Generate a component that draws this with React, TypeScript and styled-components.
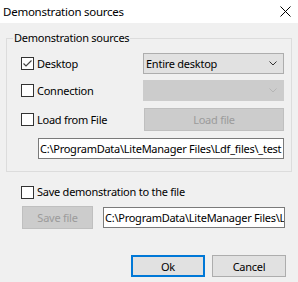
import styled, { createGlobalStyle } from 'styled-components';

const FONT = `"Noto Sans", "Open Sans", sans-serif`;

const GlobalStyle = createGlobalStyle`
  html, body {
    margin: 0;
    padding: 0;
    background: #f0f0f0;
  }
  * {
    box-sizing: border-box;
  }
`;

const Window = styled.div`
  width: 298px;
  height: 282px;
  background: #f0f0f0;
  font-family: ${FONT};
  font-size: 11px;
  letter-spacing: -0.25px;
  color: #000;
  display: flex;
  flex-direction: column;
`;

const TitleBar = styled.div`
  height: 23px;
  background: #fff;
  display: flex;
  align-items: center;
  justify-content: space-between;
  padding: 0 7px 1px 3px;
  font-size: 11.5px;
`;

const Content = styled.div`
  padding: 15px 6px 0 6px;
  display: flex;
  flex-direction: column;
`;

const GroupBox = styled.div`
  position: relative;
  width: 286px;
  border: 1px solid #dcdcdc;
  padding: 14px 7px 12px 14px;
  display: flex;
  flex-direction: column;
`;

const Legend = styled.span`
  position: absolute;
  top: -9px;
  left: 6px;
  padding: 0 1px;
  background: #f0f0f0;
  line-height: 16px;
`;

const Row = styled.div<{ $gap?: number }>`
  display: flex;
  align-items: center;
  justify-content: space-between;
  margin-top: ${(p) => p.$gap ?? 0}px;
`;

const CheckLabel = styled.label`
  display: flex;
  align-items: center;
  gap: 3px;
  line-height: 16px;
`;

const Box = styled.span`
  width: 13px;
  height: 13px;
  border: 1px solid #333;
  background: #fff;
  display: flex;
  align-items: center;
  justify-content: center;
`;

const Combo = styled.div<{ $disabled?: boolean }>`
  width: 141px;
  height: 21px;
  border: 1px solid ${(p) => (p.$disabled ? '#cccccc' : '#adadad')};
  background: ${(p) => (p.$disabled ? '#cccccc' : '#e1e1e1')};
  display: flex;
  align-items: center;
  justify-content: space-between;
  padding: 0 6px 0 2px;
`;

const Button = styled.div<{ $width: number; $disabled?: boolean; $default?: boolean }>`
  width: ${(p) => p.$width}px;
  height: ${(p) => (p.$default !== undefined ? 22 : 23)}px;
  border: ${(p) =>
    p.$default ? '2px solid #0078d7' : p.$disabled ? '1px solid #bfbfbf' : '1px solid #adadad'};
  background: ${(p) => (p.$disabled ? '#cccccc' : '#e1e1e1')};
  color: ${(p) => (p.$disabled ? '#9b9b9b' : '#000')};
  display: flex;
  align-items: center;
  justify-content: center;
`;

const PathInput = styled.div<{ $width: number }>`
  width: ${(p) => p.$width}px;
  height: 21px;
  border: 1px solid #7a7a7a;
  background: #fff;
  padding: 0 1px;
  display: flex;
  align-items: center;
  white-space: nowrap;
  overflow: hidden;
`;

const PathRow = styled.div`
  display: flex;
  margin: 7px 0 0 17px;
`;

const Outside = styled.div`
  padding: 12px 0 0 15px;
  display: flex;
  flex-direction: column;
`;

const SaveRow = styled.div`
  display: flex;
  align-items: center;
  gap: 10px;
  margin: 6px 0 0 1px;
`;

const Footer = styled.div`
  display: flex;
  justify-content: flex-end;
  gap: 7px;
  padding: 26px 6px 0 0;
`;

const Chevron = ({ color }: { color: string }) => (
  <svg width="8" height="5" viewBox="0 0 8 5">
    <path d="M0.5 0.5 L4 4 L7.5 0.5" fill="none" stroke={color} strokeWidth="1" />
  </svg>
);

const CheckBox = ({ checked, label }: { checked?: boolean; label: string }) => (
  <CheckLabel>
    <Box>
      {checked && (
        <svg width="11" height="11" viewBox="0 0 11 11">
          <path d="M1.5 5.5 L4 8 L9.5 2.5" fill="none" stroke="#444" strokeWidth="1.2" />
        </svg>
      )}
    </Box>
    {label}
  </CheckLabel>
);

export default function App() {
  return (
    <>
      <GlobalStyle />
      <Window>
        <TitleBar>
          <span>Demonstration sources</span>
          <svg width="11" height="11" viewBox="0 0 11 11">
            <path d="M0.5 0.5 L10.5 10.5 M10.5 0.5 L0.5 10.5" stroke="#000" strokeWidth="1" />
          </svg>
        </TitleBar>
        <Content>
          <GroupBox>
            <Legend>Demonstration sources</Legend>
            <Row>
              <CheckBox checked label="Desktop" />
              <Combo>
                <span>Entire desktop</span>
                <Chevron color="#333" />
              </Combo>
            </Row>
            <Row $gap={6}>
              <CheckBox label="Connection" />
              <Combo $disabled>
                <span />
                <Chevron color="#b5b5b5" />
              </Combo>
            </Row>
            <Row $gap={7}>
              <CheckBox label="Load from File" />
              <Button $width={140} $disabled>
                Load file
              </Button>
            </Row>
            <PathRow>
              <PathInput $width={246}>C:\ProgramData\LiteManager Files\Ldf_files\_test</PathInput>
            </PathRow>
          </GroupBox>
          <Outside>
            <CheckBox label="Save demonstration to the file" />
            <SaveRow>
              <Button $width={71} $disabled>
                Save file
              </Button>
              <PathInput $width={182}>C:\ProgramData\LiteManager Files\Ldf_files\_test</PathInput>
            </SaveRow>
          </Outside>
          <Footer>
            <Button $width={74} $default>
              Ok
            </Button>
            <Button $width={74} $default={false}>
              Cancel
            </Button>
          </Footer>
        </Content>
      </Window>
    </>
  );
}
